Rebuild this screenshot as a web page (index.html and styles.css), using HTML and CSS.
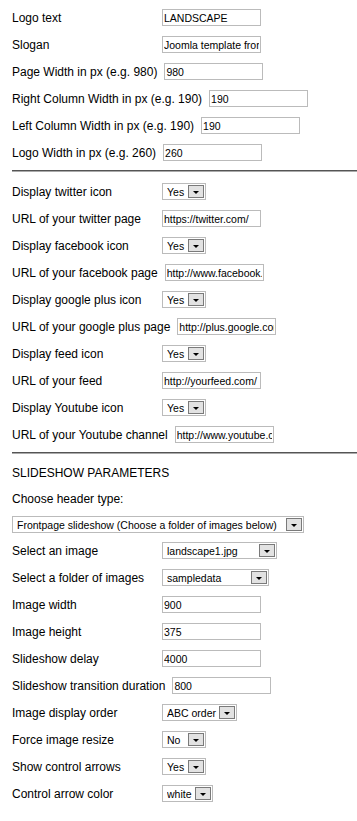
FILE: index.html
```html
<!DOCTYPE html>
<html>
<head>
    <meta charset="utf-8">
    <link rel="stylesheet" href="styles.css">
</head>
<body>
    <div class="params">
        <!-- General settings -->
        <div class="row">
            <label>Logo text</label>
            <input type="text" class="field" value="LANDSCAPE" />
        </div>
        <div class="row">
            <label>Slogan</label>
            <input type="text" class="field" value="Joomla template from Joomla-templates.com" />
        </div>
        <div class="row">
            <label>Page Width in px (e.g. 980)</label>
            <input type="text" class="field" value="980" />
        </div>
        <div class="row">
            <label>Right Column Width in px (e.g. 190)</label>
            <input type="text" class="field" value="190" />
        </div>
        <div class="row">
            <label>Left Column Width in px (e.g. 190)</label>
            <input type="text" class="field" value="190" />
        </div>
        <div class="row">
            <label>Logo Width in px (e.g. 260)</label>
            <input type="text" class="field" value="260" />
        </div>

        <div class="sep sep-first"></div>

        <!-- Social icons -->
        <div class="row">
            <label>Display twitter icon</label>
            <div class="select select-yn"><span class="value">Yes</span><span class="btn"><span class="arrow"></span></span></div>
        </div>
        <div class="row">
            <label>URL of your twitter page</label>
            <input type="text" class="field" value="https://twitter.com/" />
        </div>
        <div class="row">
            <label>Display facebook icon</label>
            <div class="select select-yn"><span class="value">Yes</span><span class="btn"><span class="arrow"></span></span></div>
        </div>
        <div class="row">
            <label>URL of your facebook page</label>
            <input type="text" class="field" value="http://www.facebook.com/" />
        </div>
        <div class="row">
            <label>Display google plus icon</label>
            <div class="select select-yn"><span class="value">Yes</span><span class="btn"><span class="arrow"></span></span></div>
        </div>
        <div class="row">
            <label>URL of your google plus page</label>
            <input type="text" class="field" value="http://plus.google.com/" />
        </div>
        <div class="row">
            <label>Display feed icon</label>
            <div class="select select-yn"><span class="value">Yes</span><span class="btn"><span class="arrow"></span></span></div>
        </div>
        <div class="row">
            <label>URL of your feed</label>
            <input type="text" class="field" value="http://yourfeed.com/" />
        </div>
        <div class="row">
            <label>Display Youtube icon</label>
            <div class="select select-yn"><span class="value">Yes</span><span class="btn"><span class="arrow"></span></span></div>
        </div>
        <div class="row">
            <label>URL of your Youtube channel</label>
            <input type="text" class="field" value="http://www.youtube.com/" />
        </div>

        <div class="sep"></div>

        <!-- Slideshow -->
        <div class="row row-title">SLIDESHOW PARAMETERS</div>
        <div class="row row-title">Choose header type:</div>
        <div class="row row-header">
            <div class="select select-header"><span class="value">Frontpage slideshow (Choose a folder of images below)</span><span class="btn"><span class="arrow"></span></span></div>
        </div>
        <div class="row">
            <label>Select an image</label>
            <div class="select select-image"><span class="value">landscape1.jpg</span><span class="btn"><span class="arrow"></span></span></div>
        </div>
        <div class="row">
            <label>Select a folder of images</label>
            <div class="select select-folder"><span class="value">sampledata</span><span class="btn"><span class="arrow"></span></span></div>
        </div>
        <div class="row">
            <label>Image width</label>
            <input type="text" class="field" value="900" />
        </div>
        <div class="row">
            <label>Image height</label>
            <input type="text" class="field" value="375" />
        </div>
        <div class="row">
            <label>Slideshow delay</label>
            <input type="text" class="field" value="4000" />
        </div>
        <div class="row">
            <label>Slideshow transition duration</label>
            <input type="text" class="field" value="800" />
        </div>
        <div class="row">
            <label>Image display order</label>
            <div class="select select-order"><span class="value">ABC order</span><span class="btn"><span class="arrow"></span></span></div>
        </div>
        <div class="row">
            <label>Force image resize</label>
            <div class="select select-yn"><span class="value">No</span><span class="btn"><span class="arrow"></span></span></div>
        </div>
        <div class="row">
            <label>Show control arrows</label>
            <div class="select select-yn"><span class="value">Yes</span><span class="btn"><span class="arrow"></span></span></div>
        </div>
        <div class="row">
            <label>Control arrow color</label>
            <div class="select select-color"><span class="value">white</span><span class="btn"><span class="arrow"></span></span></div>
        </div>
    </div>
</body>
</html>
```

FILE: styles.css
```css
body {
    margin: 0;
    background: #fff;
    font-family: "Liberation Sans", Arial, sans-serif;
    font-size: 12px;
    color: #000;
}
.params {
    padding: 4px 0 20px 12px;
}
.row {
    display: flex;
    align-items: center;
    height: 27px;
}
.row label {
    flex: none;
    min-width: 150px;
    padding-right: 7px;
    box-sizing: border-box;
    white-space: nowrap;
}
.row-title {
    height: 26px;
}
.row-header {
    height: 25px;
}
.field {
    width: 99px;
    height: 17px;
    margin: 0;
    padding: 0 1px;
    box-sizing: border-box;
    border: 1px solid #bbb;
    font-family: "Liberation Sans", Arial, sans-serif;
    font-size: 10.5px;
    color: #000;
    background: #fff;
    outline: none;
}
.sep {
    height: 0;
    border-top: 1px solid #555;
    border-bottom: 1px solid #aaa;
    margin: 4px 0 6px 0;
}
.sep-first {
    margin-top: 4px;
}
.select {
    display: flex;
    align-items: center;
    height: 17px;
    padding-left: 4px;
    box-sizing: border-box;
    border: 1px solid #bbb;
    background: #fff;
    font-size: 10.5px;
    white-space: nowrap;
}
.select .value {
    flex: 1;
    overflow: hidden;
}
.select .btn {
    flex: none;
    width: 16px;
    height: 13px;
    margin-right: 1px;
    box-sizing: border-box;
    border: 1px solid #7a7a7a;
    background: #e2e2e2;
    display: flex;
    align-items: center;
    justify-content: center;
}
.select .arrow {
    width: 0;
    height: 0;
    margin-top: 2px;
    border-left: 3.5px solid transparent;
    border-right: 3.5px solid transparent;
    border-top: 3.5px solid #000;
}
.select-yn {
    width: 44px;
}
.select-header {
    width: 292px;
}
.select-image {
    width: 115px;
}
.select-folder {
    width: 107px;
}
.select-order {
    width: 75px;
}
.select-color {
    width: 51px;
}
```
